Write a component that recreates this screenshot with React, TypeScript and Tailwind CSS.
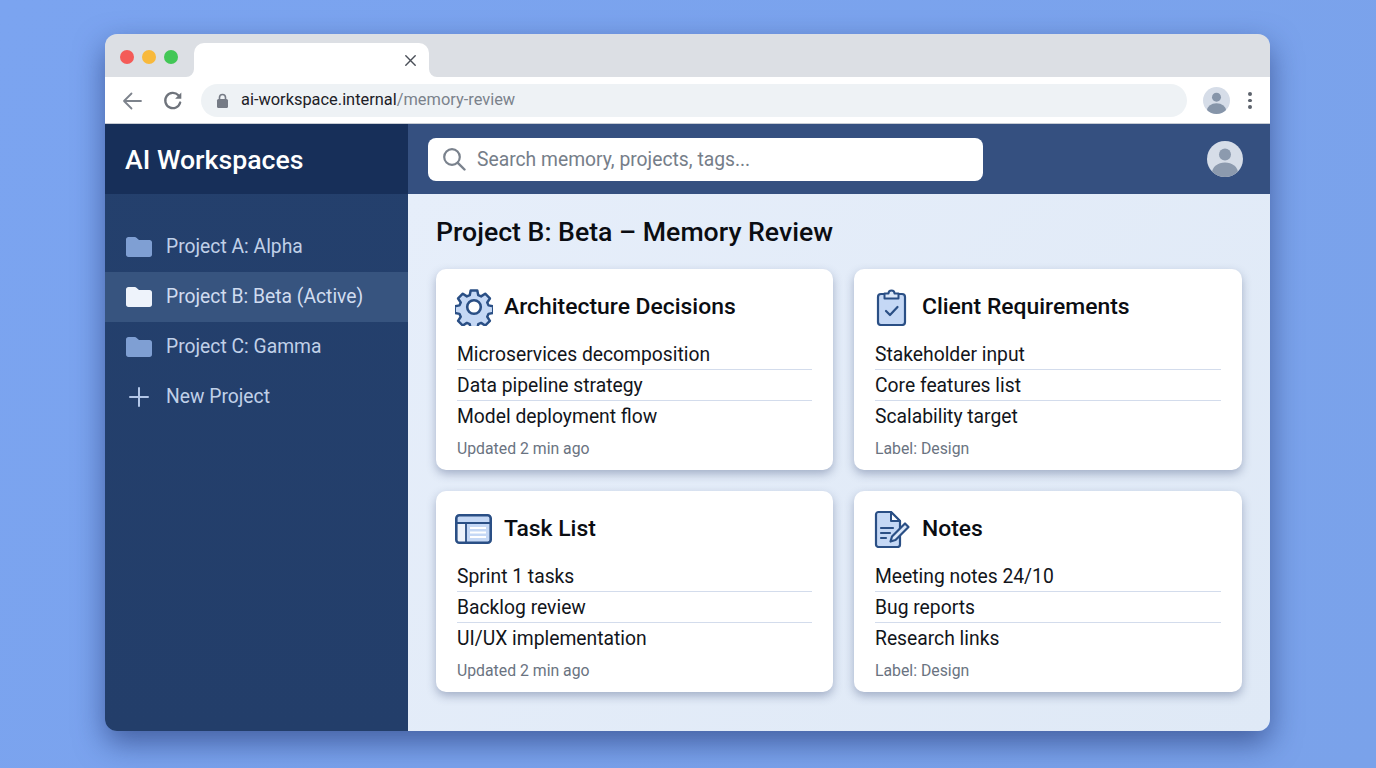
import React from "react";

const font = { fontFamily: "Roboto, 'Liberation Sans', sans-serif" };

function Folder({ active }: { active?: boolean }) {
  return (
    <svg width="28" height="22" viewBox="0 0 28 22" className="shrink-0">
      <path
        d="M1 3.500C1 2 2 1 3.500 1h6.200c.8 0 1.400.3 2 .9L14 4h10.500C26 4 27 5 27 6.500v12c0 1.500-1 2.500-2.500 2.500h-21C2 21 1 20 1 18.500z"
        fill={active ? "#eef3fb" : "#7f9fd3"}
      />
    </svg>
  );
}

function Gear() {
  return (
    <svg width="38" height="38" viewBox="0 0 38 38" fill="none">
      <path
        d="M15.500 1.500h7l1 5 3 1.300 4.300-2.800 5 5-2.800 4.300 1.300 3 5 1v7l-5 1-1.300 3 2.800 4.300-5 5-4.300-2.800-3 1.300-1 5h-7l-1-5-3-1.300-4.300 2.800-5-5 2.800-4.300-1.300-3-5-1v-7l5-1 1.300-3-2.800-4.300 5-5 4.300 2.800 3-1.300z"
        fill="#c5d8f5"
        stroke="#2a4f85"
        strokeWidth="2.600"
        strokeLinejoin="round"
        transform="translate(1 1) scale(.947)"
      />
      <circle cx="19" cy="19" r="6.800" fill="#fff" stroke="#2a4f85" strokeWidth="2.600" />
    </svg>
  );
}

function Clipboard() {
  return (
    <svg width="38" height="38" viewBox="0 0 38 38" fill="none">
      <rect x="5" y="6" width="27" height="31" rx="3" fill="#c5d8f5" stroke="#2a4f85" strokeWidth="2.200" />
      <path
        d="M11.500 5.500h4a3 3 0 0 1 6 0h4v5h-14z"
        fill="#dbe7f8"
        stroke="#2a4f85"
        strokeWidth="2"
        strokeLinejoin="round"
      />
      <path d="M13 23l4 4 7.500-8" stroke="#2a4f85" strokeWidth="2.200" strokeLinecap="round" strokeLinejoin="round" />
    </svg>
  );
}

function Table() {
  return (
    <svg width="37" height="30" viewBox="0 0 37 30" fill="none">
      <rect x="1.300" y="1.300" width="34.400" height="27.400" rx="3" fill="#eef3fb" />
      <rect x="1.300" y="1.300" width="34.400" height="7.700" fill="#c5d8f5" />
      <rect x="11" y="9" width="24.500" height="19.500" fill="#c5d8f5" />
      <path d="M2 9h33M11 9v19" stroke="#2a4f85" strokeWidth="1.800" />
      <path d="M15 14h16M15 18.500h16M15 23h16" stroke="#fff" strokeWidth="1.800" />
      <rect x="1.300" y="1.300" width="34.400" height="27.400" rx="3" stroke="#2a4f85" strokeWidth="2.600" />
    </svg>
  );
}

function NoteIcon() {
  return (
    <svg width="38" height="38" viewBox="0 0 38 38" fill="none">
      <path
        d="M3 4.500A2.500 2.500 0 0 1 5.500 2H18l9 9v23.500a2.500 2.500 0 0 1-2.500 2.500h-19A2.500 2.500 0 0 1 3 34.500z"
        fill="#c5d8f5"
        stroke="#2a4f85"
        strokeWidth="2.200"
        strokeLinejoin="round"
      />
      <path d="M18 2v9h9z" fill="#fff" stroke="#2a4f85" strokeWidth="2" strokeLinejoin="round" />
      <path d="M8 18h12M8 23h9M8 28h5" stroke="#2a4f85" strokeWidth="2.200" strokeLinecap="round" />
      <path
        d="M32 13.500l3.500 3.500-13 13-5 1.500 1.500-5z"
        fill="#dbe7f8"
        stroke="#2a4f85"
        strokeWidth="2.200"
        strokeLinejoin="round"
      />
    </svg>
  );
}

function Avatar({ size, bg, fg }: { size: number; bg: string; fg: string }) {
  return (
    <svg width={size} height={size} viewBox="0 0 36 36" className="shrink-0">
      <defs>
        <clipPath id={`av${size}`}>
          <circle cx="18" cy="18" r="18" />
        </clipPath>
      </defs>
      <circle cx="18" cy="18" r="18" fill={bg} />
      <g clipPath={`url(#av${size})`}>
        <circle cx="18" cy="13.500" r="6" fill={fg} />
        <ellipse cx="18" cy="32" rx="13" ry="10.500" fill={fg} />
      </g>
    </svg>
  );
}

function Card({
  icon,
  title,
  items,
  foot,
}: {
  icon: React.ReactNode;
  title: string;
  items: string[];
  foot: string;
}) {
  return (
    <div className="h-[201px] rounded-[10px] bg-white px-[21px] pt-[19px] shadow-[0_4px_10px_rgba(40,60,105,0.34)]">
      <div className="flex h-[38px] items-center">
        <div className="-ml-[2px] flex w-[49px] shrink-0 items-center">{icon}</div>
        <h2 className="pt-[1px] text-[22.900px] font-medium leading-none text-[#0b0d12]">{title}</h2>
      </div>
      <ul className="mt-[13px]">
        {items.map((it, i) => (
          <li
            key={it}
            className={`flex h-[31px] items-center pt-[2px] text-[19.300px] text-[#12151b] ${
              i < 2 ? "border-b border-[#d3dcec]" : ""
            }`}
          >
            {it}
          </li>
        ))}
      </ul>
      <p className="mt-[5px] text-[15.800px] leading-[24px] text-[#6a7381]">{foot}</p>
    </div>
  );
}

function Flare({ side }: { side: "left" | "right" }) {
  return (
    <svg
      width="8"
      height="8"
      viewBox="0 0 8 8"
      className={`absolute bottom-0 ${side === "left" ? "-left-[8px]" : "-right-[8px] -scale-x-100"}`}
    >
      <path d="M8 0v8H0a8 8 0 0 0 8-8z" fill="#fff" />
    </svg>
  );
}

export default function App() {
  return (
    <div
      className="h-[768px] w-[1376px] overflow-hidden bg-[linear-gradient(120deg,#7ba4f0,#7aa2ea)] pl-[105px] pt-[34px]"
      style={font}
    >
      <div className="flex h-[697px] w-[1165px] flex-col overflow-hidden rounded-[12px] shadow-[0_12px_30px_rgba(30,50,110,0.6)]">
        {/* tab strip */}
        <div className="flex h-[43px] shrink-0 items-end bg-[#dcdfe4]">
          <div className="ml-[15px] mr-[16px] flex gap-[8px] self-start pt-[16px]">
            <span className="h-[14px] w-[14px] rounded-full bg-[#f45b58]" />
            <span className="h-[14px] w-[14px] rounded-full bg-[#f8b93c]" />
            <span className="h-[14px] w-[14px] rounded-full bg-[#42c756]" />
          </div>
          <div className="relative flex h-[34px] w-[235px] items-center justify-end rounded-t-[10px] bg-white pr-[13px]">
            <Flare side="left" />
            <Flare side="right" />
            <svg width="11" height="11" viewBox="0 0 11 11">
              <path d="M.8.8l9.400 9.400M10.200.8L.8 10.200" stroke="#4a4f58" strokeWidth="1.400" strokeLinecap="round" />
            </svg>
          </div>
        </div>
        {/* toolbar */}
        <div className="flex h-[47px] shrink-0 items-center border-b border-[#c7ccd4] bg-white pl-[17px] pr-[16px] pt-[1px]">
          <svg width="20" height="20" viewBox="0 0 20 20" fill="none">
            <path d="M19 10H2M9.500 2.500L2 10l7.500 7.500" stroke="#7d838c" strokeWidth="1.800" strokeLinecap="round" strokeLinejoin="round" />
          </svg>
          <svg width="20" height="20" viewBox="0 0 20 20" fill="none" className="ml-[21px]">
            <path
              d="M17.200 11.500A7.600 7.600 0 1 1 15.400 4.300"
              stroke="#6f747c"
              strokeWidth="2.300"
              strokeLinecap="round"
            />
            <path d="M18.300 1.500v6.200h-6.200z" fill="#6f747c" />
          </svg>
          <div className="ml-[18px] flex h-[33px] w-[986px] shrink-0 items-center rounded-full bg-[#eef2f5] pl-[15px] text-[16.400px]">
            <svg width="13" height="16" viewBox="0 0 13 16" className="shrink-0">
              <rect x="1" y="6" width="11" height="9" rx="1.500" fill="#757b85" />
              <path d="M3.500 6.500V4.500a3 3 0 0 1 6 0v2" fill="none" stroke="#757b85" strokeWidth="1.600" />
            </svg>
            <span className="ml-[12px] text-[#1c2026]">ai-workspace.internal</span>
            <span className="text-[#7b828c]">/memory-review</span>
          </div>
          <div className="ml-[16px]">
            <Avatar size={27} bg="#d6dde8" fg="#8695a9" />
          </div>
          <div className="ml-[18px] flex flex-col gap-[3px]">
            <span className="h-[3.500px] w-[3.500px] rounded-full bg-[#5d636c]" />
            <span className="h-[3.500px] w-[3.500px] rounded-full bg-[#5d636c]" />
            <span className="h-[3.500px] w-[3.500px] rounded-full bg-[#5d636c]" />
          </div>
        </div>
        {/* body */}
        <div className="flex min-h-0 flex-1">
          <aside className="flex w-[303px] shrink-0 flex-col bg-[linear-gradient(180deg,#24406d,#233e6a)]">
            <div className="flex h-[70px] shrink-0 items-center bg-[#172f59] pl-[20px] pt-[2px] text-[26.700px] font-medium text-white">
              AI Workspaces
            </div>
            <nav className="pt-[28px] text-[19.300px] text-[#c0d0e8]">
              {[
                { t: "Project A: Alpha" },
                { t: "Project B: Beta (Active)", a: true },
                { t: "Project C: Gamma" },
              ].map((p) => (
                <div
                  key={p.t}
                  className={`flex h-[50px] items-center gap-[13px] pl-[20px] ${p.a ? "bg-[#37547f] text-[#d0dcf0]" : ""}`}
                >
                  <Folder active={p.a} />
                  <span>{p.t}</span>
                </div>
              ))}
              <div className="flex h-[50px] items-center gap-[17px] pl-[24px]">
                <svg width="20" height="20" viewBox="0 0 20 20">
                  <path d="M10 1v18M1 10h18" stroke="#b3c7e8" strokeWidth="2" strokeLinecap="round" />
                </svg>
                <span>New Project</span>
              </div>
            </nav>
          </aside>
          <div className="flex min-w-0 flex-1 flex-col">
            <header className="flex h-[70px] shrink-0 items-center justify-between bg-[#355080] pl-[20px] pr-[27px]">
              <div className="flex h-[43px] w-[555px] items-center rounded-[8px] bg-white pl-[14px] text-[19.300px] text-[#767e89]">
                <svg width="24" height="24" viewBox="0 0 24 24" fill="none">
                  <circle cx="10" cy="10" r="7.800" stroke="#7a828d" strokeWidth="2.200" />
                  <path d="M15.800 15.800l6.700 6.700" stroke="#7a828d" strokeWidth="2.400" strokeLinecap="round" />
                </svg>
                <span className="ml-[11px] pt-[3px]">Search memory, projects, tags...</span>
              </div>
              <Avatar size={36} bg="#d6dde8" fg="#8c9aae" />
            </header>
            <main className="min-h-0 flex-1 bg-[linear-gradient(135deg,#e6eefa,#dfe9f6)] pl-[28px] pr-[28px] pt-[22px]">
              <h1 className="h-[33px] text-[26.660px] font-medium leading-[33px] text-[#0b0d12]">
                Project B: Beta – Memory Review
              </h1>
              <div className="mt-[20px] grid grid-cols-[397px_388px] gap-x-[21px] gap-y-[21px]">
                <Card
                  icon={<Gear />}
                  title="Architecture Decisions"
                  items={["Microservices decomposition", "Data pipeline strategy", "Model deployment flow"]}
                  foot="Updated 2 min ago"
                />
                <Card
                  icon={<Clipboard />}
                  title="Client Requirements"
                  items={["Stakeholder input", "Core features list", "Scalability target"]}
                  foot="Label: Design"
                />
                <Card
                  icon={<Table />}
                  title="Task List"
                  items={["Sprint 1 tasks", "Backlog review", "UI/UX implementation"]}
                  foot="Updated 2 min ago"
                />
                <Card
                  icon={<NoteIcon />}
                  title="Notes"
                  items={["Meeting notes 24/10", "Bug reports", "Research links"]}
                  foot="Label: Design"
                />
              </div>
            </main>
          </div>
        </div>
      </div>
    </div>
  );
}
